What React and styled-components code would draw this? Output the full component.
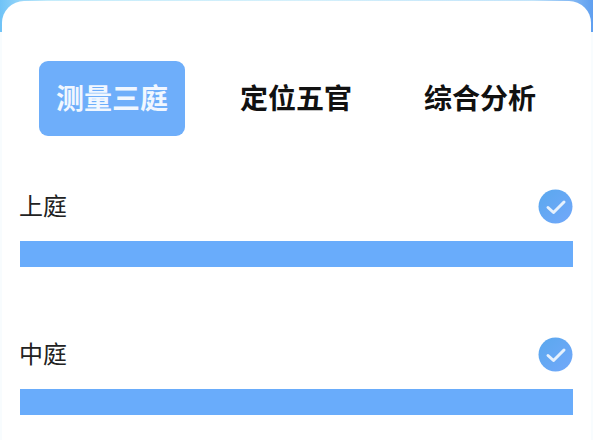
import React from "react";
import styled, { createGlobalStyle } from "styled-components";

const Global = createGlobalStyle`
  html, body {
    margin: 0;
    padding: 0;
    width: 593px;
    height: 440px;
    overflow: hidden;
    background: #fff;
  }
`;

const Page = styled.div`
  width: 593px;
  height: 440px;
  overflow: hidden;
  box-sizing: border-box;
  padding: 1px 2px 0 2px;
  background: linear-gradient(90deg, #6fc3f7 0%, #c5ecfb 8%, #d4f0fb 50%, #c2e4fa 90%, #5f9ff0 100%) no-repeat;
  background-size: 100% 32px;
  background-color: #f8fcfe;
  font-family: "Noto Sans CJK SC", "Noto Sans", sans-serif;
`;

const Card = styled.div`
  height: 460px;
  box-sizing: border-box;
  background: #fff;
  border-radius: 22px 22px 0 0;
  padding: 60px 18px 0 18px;
`;

const Tabs = styled.div`
  display: grid;
  grid-template-columns: repeat(3, 146px);
  justify-content: space-between;
  padding: 0 20px 0 19px;
  column-gap: 38px;
`;

const Tab = styled.div`
  height: 75px;
  box-sizing: border-box;
  padding-bottom: 3px;
  border-radius: 9px;
  display: flex;
  align-items: center;
  justify-content: center;
  font-size: 28px;
  font-weight: 700;
  line-height: 1;
  color: ${(p) => (p.$active ? "#f1f7ff" : "#111")};
  background: ${(p) => (p.$active ? "#6eaefa" : "transparent")};
`;

const Sections = styled.div`
  display: flex;
  flex-direction: column;
  gap: 69px;
  margin-top: 52px;
`;

const Section = styled.div`
  display: flex;
  flex-direction: column;
  gap: 17px;
`;

const Row = styled.div`
  display: flex;
  align-items: center;
  justify-content: space-between;
  height: 36px;
`;

const Label = styled.div`
  font-size: 24px;
  line-height: 1;
  color: #222;
  margin: -2px 0 0 -1px;
`;

const Bar = styled.div`
  height: 26px;
  background: #69acfb;
`;

const Check = () => (
  <svg width="35" height="35" viewBox="0 0 35 35">
    <defs>
      <linearGradient id="checkFill" x1="0" y1="0" x2="1" y2="1">
        <stop offset="0" stopColor="#5aa8ee" />
        <stop offset="1" stopColor="#72a8fa" />
      </linearGradient>
    </defs>
    <circle cx="17.5" cy="17.5" r="17" fill="url(#checkFill)" />
    <path
      d="M10 18.5 L15.5 23.5 L26 13"
      fill="none"
      stroke="#e6f1fd"
      strokeWidth="3"
      strokeLinecap="round"
      strokeLinejoin="round"
    />
  </svg>
);

const tabs = ["测量三庭", "定位五官", "综合分析"];
const sections = ["上庭", "中庭"];

export default function App() {
  return (
    <Page>
      <Global />
      <Card>
        <Tabs>
          {tabs.map((t, i) => (
            <Tab key={t} $active={i === 0}>
              {t}
            </Tab>
          ))}
        </Tabs>
        <Sections>
          {sections.map((s) => (
            <Section key={s}>
              <Row>
                <Label>{s}</Label>
                <Check />
              </Row>
              <Bar />
            </Section>
          ))}
        </Sections>
      </Card>
    </Page>
  );
}
